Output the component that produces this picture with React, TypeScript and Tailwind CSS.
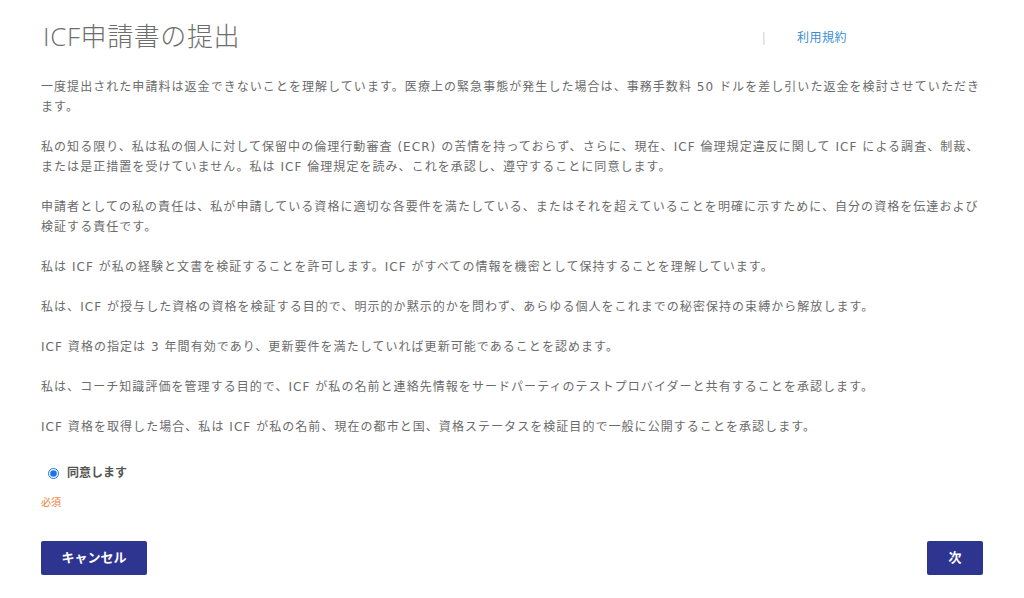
const paragraphs = [
  '一度提出された申請料は返金できないことを理解しています。医療上の緊急事態が発生した場合は、事務手数料 50 ドルを差し引いた返金を検討させていただきます。',
  '私の知る限り、私は私の個人に対して保留中の倫理行動審査 (ECR) の苦情を持っておらず、さらに、現在、ICF 倫理規定違反に関して ICF による調査、制裁、または是正措置を受けていません。私は ICF 倫理規定を読み、これを承認し、遵守することに同意します。',
  '申請者としての私の責任は、私が申請している資格に適切な各要件を満たしている、またはそれを超えていることを明確に示すために、自分の資格を伝達および検証する責任です。',
  '私は ICF が私の経験と文書を検証することを許可します。ICF がすべての情報を機密として保持することを理解しています。',
  '私は、ICF が授与した資格の資格を検証する目的で、明示的か黙示的かを問わず、あらゆる個人をこれまでの秘密保持の束縛から解放します。',
  'ICF 資格の指定は 3 年間有効であり、更新要件を満たしていれば更新可能であることを認めます。',
  '私は、コーチ知識評価を管理する目的で、ICF が私の名前と連絡先情報をサードパーティのテストプロバイダーと共有することを承認します。',
  'ICF 資格を取得した場合、私は ICF が私の名前、現在の都市と国、資格ステータスを検証目的で一般に公開することを承認します。',
];

export default function App() {
  return (
    <div
      className="w-[1024px] min-h-[598px] bg-white px-[41px] text-[#6b6b6b]"
      style={{ fontFamily: '"Open Sans", "Noto Sans CJK JP", sans-serif' }}
    >
      <header className="flex items-center pt-[18px] h-[58px]">
        <h1 className="text-[26px] font-light text-[#6e6e6e] pl-[2px] mb-[4px] tracking-[0.6px]">ICF申請書の提出</h1>
        <div className="ml-auto mr-[136px] flex items-center text-[12px]">
          <span className="text-[#c8c8c8] mr-[30px]">|</span>
          <a className="text-[#3a8ed4] tracking-[0.5px]">利用規約</a>
        </div>
      </header>

      <div
        className="mt-[19px] flex flex-col gap-[20px] text-[12px] leading-[20px] tracking-[1.05px]"
        style={{ fontFamily: '"DejaVu Sans", "Noto Sans CJK JP", sans-serif' }}
      >
        {paragraphs.map((p, i) => (
          <p key={i}>{p}</p>
        ))}
      </div>

      <label className="mt-[27px] ml-[7px] flex items-center gap-[8px] text-[12px] font-bold text-[#555]">
        <input type="radio" defaultChecked className="w-[11px] h-[11px] accent-[#1a73e8]" />
        同意します
      </label>
      <div className="mt-[13px] text-[10px] text-[#f0813a]">必須</div>

      <div className="mt-[31px] flex justify-between">
        <button className="w-[106px] h-[34px] rounded-[2px] bg-[#2e3590] text-white text-[13px] font-bold">
          キャンセル
        </button>
        <button className="w-[56px] h-[34px] rounded-[2px] bg-[#2e3590] text-white text-[13px] font-bold">
          次
        </button>
      </div>
    </div>
  );
}
